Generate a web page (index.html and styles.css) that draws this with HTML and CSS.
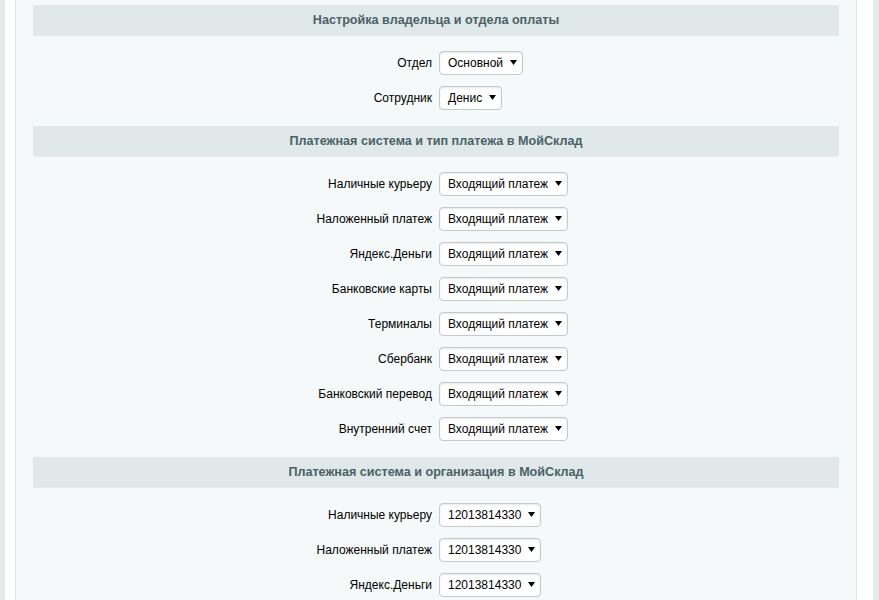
FILE: index.html
```html
<!DOCTYPE html>
<html lang="ru">
<head>
<meta charset="utf-8">
<title>Настройки</title>
<link rel="stylesheet" href="styles.css">
</head>
<body>
<div class="frame">
  <div class="inner">
    <section class="block">
      <h2 class="head">Настройка владельца и отдела оплаты</h2>
      <div class="rows">
        <div class="row"><label class="lbl">Отдел</label><div class="val"><span class="sel">Основной<svg class="arr" viewBox="0 0 7 5"><path d="M0 0H7L3.5 5Z"/></svg></span></div></div>
        <div class="row"><label class="lbl">Сотрудник</label><div class="val"><span class="sel">Денис<svg class="arr" viewBox="0 0 7 5"><path d="M0 0H7L3.5 5Z"/></svg></span></div></div>
      </div>
    </section>
    <section class="block">
      <h2 class="head">Платежная система и тип платежа в МойСклад</h2>
      <div class="rows">
        <div class="row"><label class="lbl">Наличные курьеру</label><div class="val"><span class="sel">Входящий платеж<svg class="arr" viewBox="0 0 7 5"><path d="M0 0H7L3.5 5Z"/></svg></span></div></div>
        <div class="row"><label class="lbl">Наложенный платеж</label><div class="val"><span class="sel">Входящий платеж<svg class="arr" viewBox="0 0 7 5"><path d="M0 0H7L3.5 5Z"/></svg></span></div></div>
        <div class="row"><label class="lbl">Яндекс.Деньги</label><div class="val"><span class="sel">Входящий платеж<svg class="arr" viewBox="0 0 7 5"><path d="M0 0H7L3.5 5Z"/></svg></span></div></div>
        <div class="row"><label class="lbl">Банковские карты</label><div class="val"><span class="sel">Входящий платеж<svg class="arr" viewBox="0 0 7 5"><path d="M0 0H7L3.5 5Z"/></svg></span></div></div>
        <div class="row"><label class="lbl">Терминалы</label><div class="val"><span class="sel">Входящий платеж<svg class="arr" viewBox="0 0 7 5"><path d="M0 0H7L3.5 5Z"/></svg></span></div></div>
        <div class="row"><label class="lbl">Сбербанк</label><div class="val"><span class="sel">Входящий платеж<svg class="arr" viewBox="0 0 7 5"><path d="M0 0H7L3.5 5Z"/></svg></span></div></div>
        <div class="row"><label class="lbl">Банковский перевод</label><div class="val"><span class="sel">Входящий платеж<svg class="arr" viewBox="0 0 7 5"><path d="M0 0H7L3.5 5Z"/></svg></span></div></div>
        <div class="row"><label class="lbl">Внутренний счет</label><div class="val"><span class="sel">Входящий платеж<svg class="arr" viewBox="0 0 7 5"><path d="M0 0H7L3.5 5Z"/></svg></span></div></div>
      </div>
    </section>
    <section class="block">
      <h2 class="head">Платежная система и организация в МойСклад</h2>
      <div class="rows">
        <div class="row"><label class="lbl">Наличные курьеру</label><div class="val"><span class="sel">12013814330<svg class="arr" viewBox="0 0 7 5"><path d="M0 0H7L3.5 5Z"/></svg></span></div></div>
        <div class="row"><label class="lbl">Наложенный платеж</label><div class="val"><span class="sel">12013814330<svg class="arr" viewBox="0 0 7 5"><path d="M0 0H7L3.5 5Z"/></svg></span></div></div>
        <div class="row"><label class="lbl">Яндекс.Деньги</label><div class="val"><span class="sel">12013814330<svg class="arr" viewBox="0 0 7 5"><path d="M0 0H7L3.5 5Z"/></svg></span></div></div>
      </div>
    </section>
  </div>
</div>
</body>
</html>
```

FILE: styles.css
```css
html, body {
  margin: 0;
  padding: 0;
}
body {
  background: #e3ebed;
  font-family: "Liberation Sans", Arial, sans-serif;
  font-size: 12px;
  color: #000;
  overflow: hidden;
}
.frame {
  margin-left: 5px;
  width: 868px;
  box-sizing: border-box;
  background: #fff;
  padding: 0 16px 0 10px;
}
.inner {
  background: #f5f9f9;
  border-left: 1px solid #dfe6e8;
  border-right: 1px solid #dfe6e8;
  padding: 5px 17px 40px;
}
.head {
  margin: 0;
  height: 30px;
  line-height: 30px;
  background: #e0e8ea;
  border-bottom: 1px solid #e6edef;
  text-align: center;
  font-size: 12.6px;
  font-weight: bold;
  color: #4b6267;
}
.rows {
  padding: 9px 0 11px;
}
.row {
  display: grid;
  grid-template-columns: 1fr 1fr;
  height: 35px;
  align-items: center;
}
.lbl {
  text-align: right;
  padding-right: 4px;
}
.val {
  padding-left: 3px;
}
.sel {
  display: inline-flex;
  align-items: center;
  box-sizing: border-box;
  height: 24px;
  padding: 0 5px 0 8px;
  background: #fff;
  border: 1px solid #c3c9cc;
  border-radius: 4px;
  box-shadow: inset 0 1px 2px rgba(180, 188, 191, 0.35);
  color: #000;
  white-space: nowrap;
}
.arr {
  width: 7px;
  height: 5px;
  margin-left: 7px;
  fill: #000;
}
```
